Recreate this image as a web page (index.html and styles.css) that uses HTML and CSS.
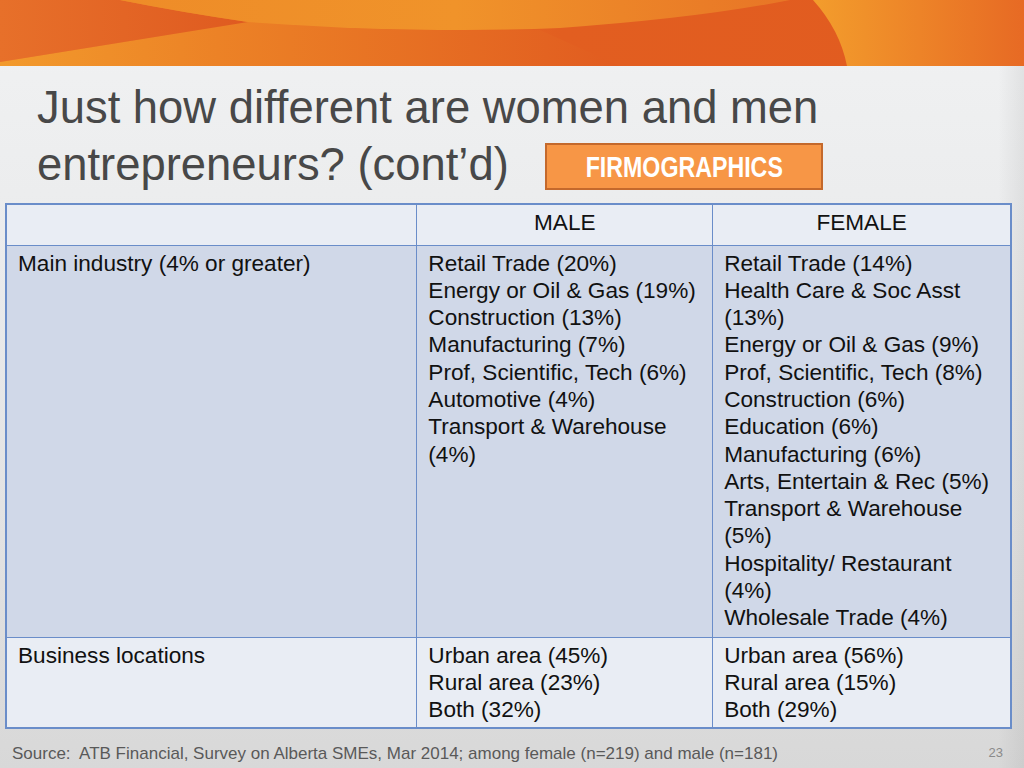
FILE: index.html
```html
<!DOCTYPE html>
<html>
<head>
<meta charset="utf-8">
<link rel="stylesheet" href="styles.css">
</head>
<body>
<div class="slide">
  <header class="banner">
    <svg class="banner-art" viewBox="0 0 1024 66" preserveAspectRatio="none" width="1024" height="66">
      <defs>
        <linearGradient id="gBase" x1="0" y1="0" x2="1" y2="0">
          <stop offset="0" stop-color="#ef8a27"/>
          <stop offset="0.3" stop-color="#eb7b25"/>
          <stop offset="0.55" stop-color="#e25e20"/>
          <stop offset="1" stop-color="#e15b20"/>
        </linearGradient>
        <linearGradient id="gWedge" x1="0" y1="0" x2="1" y2="0">
          <stop offset="0" stop-color="#e7702a"/>
          <stop offset="1" stop-color="#df5a20"/>
        </linearGradient>
        <linearGradient id="gBand" x1="0" y1="0" x2="1" y2="0">
          <stop offset="0" stop-color="#ee8c28"/>
          <stop offset="0.5" stop-color="#f0932a"/>
          <stop offset="1" stop-color="#e87526"/>
        </linearGradient>
        <linearGradient id="gLow" x1="0" y1="0" x2="1" y2="0">
          <stop offset="0" stop-color="#f29a2c"/>
          <stop offset="0.35" stop-color="#ec8226"/>
          <stop offset="1" stop-color="#e15c20"/>
        </linearGradient>
        <linearGradient id="gRight" x1="0" y1="0" x2="1" y2="0">
          <stop offset="0" stop-color="#f39d2c"/>
          <stop offset="1" stop-color="#e76a24"/>
        </linearGradient>
      </defs>
      <rect x="0" y="0" width="1024" height="66" fill="url(#gBase)"/>
      <path d="M0,66 L0,62 L248,22 Q400,32 540,30 L620,66 Z" fill="url(#gLow)"/>
      <path d="M0,0 L120,0 Q180,12 248,22 L0,62 Z" fill="url(#gWedge)"/>
      <path d="M120,0 Q180,12 248,22 Q420,34 560,28 Q700,18 790,0 Z" fill="url(#gBand)"/>
      <path d="M813,0 Q840,30 847,66 L1024,66 L1024,0 Z" fill="url(#gRight)"/>
    </svg>
  </header>

  <div class="title-area">
    <h1 class="title">
      <span class="title-line">Just how different are women and men</span>
      <span class="title-line title-line-2">entrepreneurs? (cont’d)<span class="badge"><span class="badge-text">FIRMOGRAPHICS</span></span></span>
    </h1>
  </div>

  <table class="data">
    <tr class="row-head">
      <th class="c1"></th>
      <th class="c2">MALE</th>
      <th class="c3">FEMALE</th>
    </tr>
    <tr class="row-main">
      <td>Main industry (4% or greater)</td>
      <td>Retail Trade (20%)<br>Energy or Oil &amp; Gas (19%)<br>Construction (13%)<br>Manufacturing (7%)<br>Prof, Scientific, Tech (6%)<br>Automotive (4%)<br>Transport &amp; Warehouse<br>(4%)</td>
      <td>Retail Trade (14%)<br>Health Care &amp; Soc Asst<br>(13%)<br>Energy or Oil &amp; Gas (9%)<br>Prof, Scientific, Tech (8%)<br>Construction (6%)<br>Education (6%)<br>Manufacturing (6%)<br>Arts, Entertain &amp; Rec (5%)<br>Transport &amp; Warehouse<br>(5%)<br>Hospitality/ Restaurant<br>(4%)<br>Wholesale Trade (4%)</td>
    </tr>
    <tr class="row-loc">
      <td>Business locations</td>
      <td>Urban area (45%)<br>Rural area (23%)<br>Both (32%)</td>
      <td>Urban area (56%)<br>Rural area (15%)<br>Both (29%)</td>
    </tr>
  </table>

  <footer class="footer">
    <div class="source">
      <div>Source:&nbsp; ATB Financial, Survey on Alberta SMEs, Mar 2014; among female (n=219) and male (n=181)</div>
      <div class="source-2">respondents</div>
    </div>
    <div class="page-no">23</div>
  </footer>
</div>
</body>
</html>
```

FILE: styles.css
```css
html, body {
  margin: 0;
  padding: 0;
}
body {
  width: 1024px;
  height: 768px;
  overflow: hidden;
  font-family: "Liberation Sans", Arial, sans-serif;
}
.slide {
  width: 1024px;
  height: 768px;
  overflow: hidden;
  display: flex;
  flex-direction: column;
  background:
    linear-gradient(to right, rgba(0,0,0,0) 0, rgba(0,0,0,0) 97.5%, rgba(120,120,120,0.12) 100%),
    linear-gradient(to bottom, #f1f2f3 0%, #ebeced 30%, #e2e2e2 70%, #d8d8d8 100%);
}
.banner {
  height: 66px;
  flex: none;
}
.banner-art {
  display: block;
}
.title-area {
  padding: 13px 0 0 37px;
  height: 137px;
  box-sizing: border-box;
  flex: none;
}
.title {
  margin: 0;
  font-weight: normal;
  font-size: 45.4px;
  line-height: 57px;
  color: #484848;
  display: flex;
  flex-direction: column;
}
.title-line {
  display: block;
  white-space: nowrap;
}
.title-line-2 {
  display: flex;
  align-items: flex-start;
}
.badge {
  display: flex;
  align-items: center;
  justify-content: center;
  margin: 7px 0 0 36px;
  width: 278px;
  height: 47px;
  box-sizing: border-box;
  background: #f79646;
  border: 2px solid #c4692c;
  color: #ffffff;
  overflow: hidden;
}
.badge-text {
  display: inline-block;
  font-weight: bold;
  font-size: 29px;
  line-height: 40px;
  transform: scaleX(0.8);
  transform-origin: center;
  white-space: nowrap;
}
.data {
  margin: 0 0 0 5px;
  width: 1007px;
  border-collapse: collapse;
  border: 2px solid #6a8dc9;
  font-size: 22.6px;
  line-height: 27.3px;
  color: #111111;
  flex: none;
}
.data th, .data td {
  border: 1px solid #6a8dc9;
  padding: 4px 11px 4px 11px;
  vertical-align: top;
  text-align: left;
}
.data th {
  font-weight: normal;
  text-align: center;
  vertical-align: middle;
  padding: 0 0 4px 0;
}
.c1 { width: 412px; }
.c2 { width: 296px; }
.c3 { width: 298px; }
.row-head {
  height: 41px;
  background: #e9edf4;
}
.row-main {
  height: 392px;
  background: #d0d8e8;
}
.row-loc {
  height: 90px;
  background: #e9edf4;
}
.footer {
  display: flex;
  justify-content: space-between;
  align-items: flex-start;
  padding: 13px 21px 0 12px;
  color: #595959;
}
.source {
  font-size: 17px;
  line-height: 24px;
}
.source-2 {
  padding-left: 13px;
}
.page-no {
  font-size: 13px;
  line-height: 22px;
  color: #8a8a8a;
}
```
